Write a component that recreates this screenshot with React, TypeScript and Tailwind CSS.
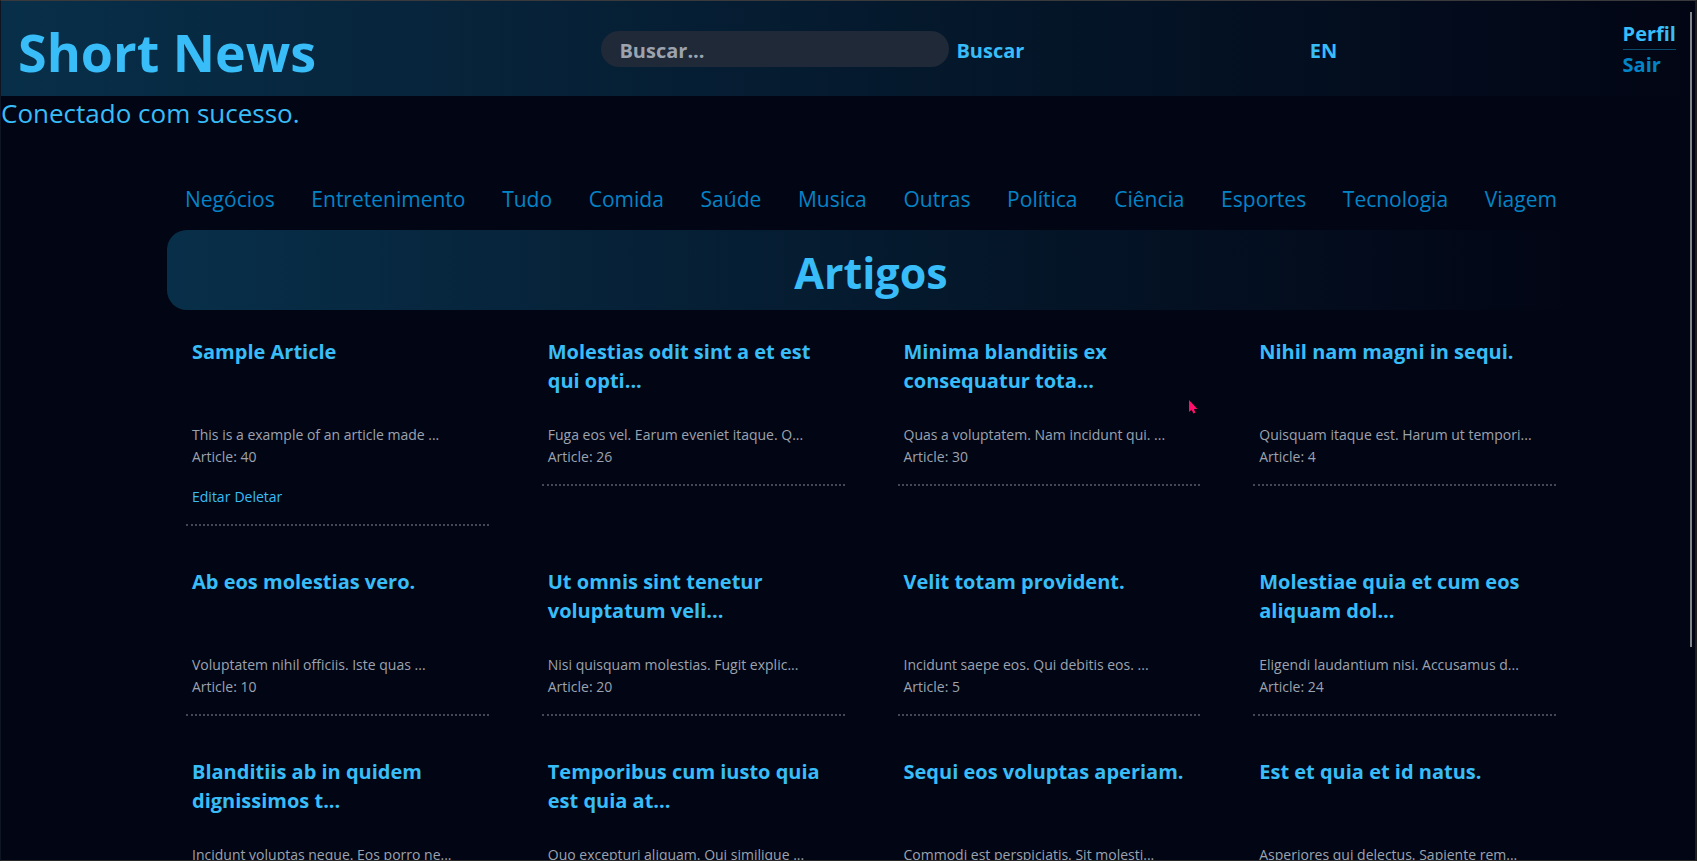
const categories = [
  "Negócios", "Entretenimento", "Tudo", "Comida", "Saúde", "Musica",
  "Outras", "Política", "Ciência", "Esportes", "Tecnologia", "Viagem",
];

type Article = { title: string; excerpt: string; id?: number; editable?: boolean };

const articles: Article[] = [
  { title: "Sample Article", excerpt: "This is a example of an article made ...", id: 40, editable: true },
  { title: "Molestias odit sint a et est qui opti...", excerpt: "Fuga eos vel. Earum eveniet itaque. Q...", id: 26 },
  { title: "Minima blanditiis ex consequatur tota...", excerpt: "Quas a voluptatem. Nam incidunt qui. ...", id: 30 },
  { title: "Nihil nam magni in sequi.", excerpt: "Quisquam itaque est. Harum ut tempori...", id: 4 },
  { title: "Ab eos molestias vero.", excerpt: "Voluptatem nihil officiis. Iste quas ...", id: 10 },
  { title: "Ut omnis sint tenetur voluptatum veli...", excerpt: "Nisi quisquam molestias. Fugit explic...", id: 20 },
  { title: "Velit totam provident.", excerpt: "Incidunt saepe eos. Qui debitis eos. ...", id: 5 },
  { title: "Molestiae quia et cum eos aliquam dol...", excerpt: "Eligendi laudantium nisi. Accusamus d...", id: 24 },
  { title: "Blanditiis ab in quidem dignissimos t...", excerpt: "Incidunt voluptas neque. Eos porro ne..." },
  { title: "Temporibus cum iusto quia est quia at...", excerpt: "Quo excepturi aliquam. Qui similique ..." },
  { title: "Sequi eos voluptas aperiam.", excerpt: "Commodi est perspiciatis. Sit molesti..." },
  { title: "Est et quia et id natus.", excerpt: "Asperiores qui delectus. Sapiente rem..." },
];

function Header() {
  return (
    <header className="flex h-[95px] items-center justify-between bg-linear-to-r/srgb from-[#082f49] to-[#020514] pt-px pr-[19px] pl-[17px] text-xl leading-[30px] font-bold text-[#38bdf8]">
      <h1 className="pt-[6px] text-[52px] leading-[60px]">Short News</h1>
      <form className="flex items-center gap-[7px]" onSubmit={(e) => e.preventDefault()}>
        <input
          type="search"
          aria-label="Buscar"
          placeholder="Buscar..."
          className="h-9 w-[348px] rounded-full bg-[#1f2937] px-[18px] pt-[2px] font-bold outline-none placeholder:text-[#9ca3af]"
        />
        <button type="submit" className="pt-1">Buscar</button>
      </form>
      <a href="#en" className="pt-1">EN</a>
      <nav className="flex flex-col">
        <a href="#perfil" className="border-b border-[#0c4a6e]">Perfil</a>
        <a href="#sair" className="text-[#0284c7]">Sair</a>
      </nav>
    </header>
  );
}

function ArticleCard({ title, excerpt, id, editable }: Article) {
  return (
    <article className="border-b-2 border-dotted border-[#444854] px-[6px] pb-4 text-sm leading-[22px] text-[#9ca3af]">
      <h3 className="h-[87px] text-xl leading-[29px] font-bold text-[#38bdf8]">{title}</h3>
      <p>{excerpt}</p>
      {id !== undefined && <p>Article: {id}</p>}
      {editable && (
        <div className="mt-[18px] flex gap-1 text-[#38bdf8]">
          <a href="#editar">Editar</a>
          <button type="button">Deletar</button>
        </div>
      )}
    </article>
  );
}

export default function App() {
  return (
    <div className="relative h-screen overflow-hidden border-t border-r-2 border-b border-l border-t-[#3a3a3c] border-r-[#1f1f1f] border-b-[#2a2a2a] border-l-[#101522] bg-[#020514] font-['Open_Sans','Noto_Sans',sans-serif]">
      <Header />
      <p className="text-[26px] leading-[34px] text-[#38bdf8]">Conectado com sucesso.</p>
      <main className="mt-[51px] pr-[120px] pl-[166px]">
        <nav className="flex h-[49px] justify-between px-[18px] pt-[3px] text-[21px] leading-[30px] text-[#0284c7]">
          {categories.map((name) => (
            <a key={name} href={`#${name}`}>{name}</a>
          ))}
        </nav>
        <h2 className="h-20 rounded-[20px] bg-linear-to-r/srgb from-[#082f49] to-[#020514] text-center text-[43px] leading-[86px] font-bold text-[#38bdf8]">
          Artigos
        </h2>
        <section className="mt-[27px] grid grid-cols-4 items-start gap-x-[53px] gap-y-[41px] px-[19px]">
          {articles.map((article) => (
            <ArticleCard key={article.title} {...article} />
          ))}
        </section>
      </main>
      <div className="absolute top-[11px] right-[3px] h-[635px] w-[2px] bg-[#85868c]" />
      <svg className="absolute top-[399px] left-[1187px]" width="10" height="15" viewBox="0 0 10 15" aria-hidden="true">
        <path d="M1 0V12L3.6 9.8L5.4 13.6L7.4 12.8L6 9H9.4Z" fill="#ff0f6b" />
      </svg>
    </div>
  );
}
